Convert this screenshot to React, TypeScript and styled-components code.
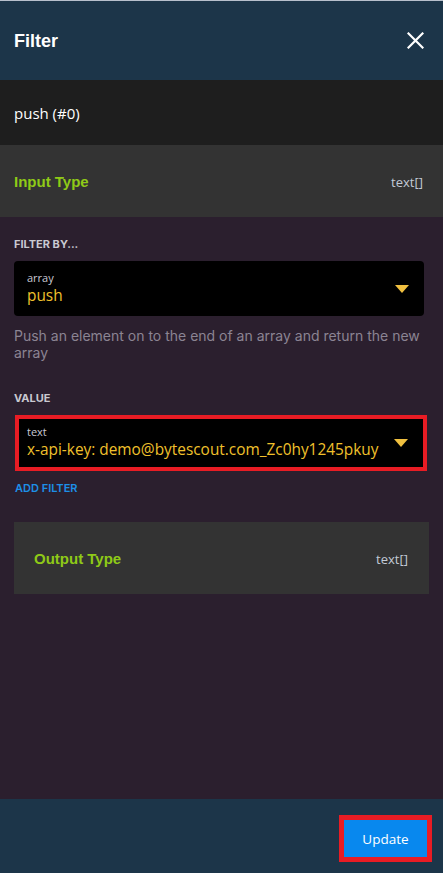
import React from "react";
import styled, { createGlobalStyle } from "styled-components";

const Global = createGlobalStyle`
  html, body { margin: 0; padding: 0; background: #2b1f2e; }
  body { font-family: "Liberation Sans", Arial, sans-serif; }
  * { box-sizing: border-box; }
`;

const Panel = styled.div`
  width: 443px;
  height: 873px;
  display: flex;
  flex-direction: column;
  background: #2b1f2e;
  border-top: 1px solid #b8c0cc;
`;

const Header = styled.div`
  height: 79px;
  flex: none;
  background: #1c3549;
  display: flex;
  align-items: center;
  justify-content: space-between;
  padding: 0 18px 0 14px;
`;

const Title = styled.h1`
  margin: 0;
  font-family: "Liberation Sans", Arial, sans-serif;
  font-weight: 700;
  font-size: 18px;
  color: #ffffff;
  padding-top: 1px;
`;

const CloseButton = styled.button`
  background: none;
  border: none;
  padding: 0;
  width: 20px;
  height: 20px;
  display: flex;
  align-items: center;
  justify-content: center;
  cursor: pointer;
`;

const NameRow = styled.div`
  height: 65px;
  flex: none;
  background: #1e1e1e;
  display: flex;
  align-items: center;
  padding: 0 14px;
  font-family: "Open Sans", "Noto Sans", sans-serif;
  font-size: 15px;
  color: #ffffff;
`;

const TypeRow = styled.div<{ $inset?: boolean }>`
  height: 72px;
  flex: none;
  background: #333333;
  display: flex;
  align-items: center;
  justify-content: space-between;
  padding: ${(p) => (p.$inset ? "0 21px 0 20px" : "0 20px 0 14px")};
`;

const TypeName = styled.span`
  font-family: "Liberation Sans", Arial, sans-serif;
  font-weight: 700;
  font-size: 15px;
  color: #8fca17;
`;

const TypeValue = styled.span`
  font-family: "Open Sans", "Noto Sans", sans-serif;
  font-size: 13px;
  color: #c2cad6;
  padding-top: 2px;
`;

const Body = styled.div`
  flex: 1;
  display: flex;
  flex-direction: column;
  padding: 20px 19px 0 14px;
`;

const FieldLabel = styled.div<{ $top?: number }>`
  font-family: "Inter", "Liberation Sans", sans-serif;
  font-weight: 700;
  font-size: 11px;
  line-height: 14px;
  color: #c9c9d1;
  margin-top: ${(p) => p.$top ?? 0}px;
  margin-bottom: 10px;
`;

const Select = styled.div<{ $flagged?: boolean }>`
  display: flex;
  align-items: center;
  justify-content: space-between;
  background: #000000;
  border-radius: ${(p) => (p.$flagged ? "0" : "4px")};
  border: ${(p) => (p.$flagged ? "4px solid #e81c24" : "none")};
  height: ${(p) => (p.$flagged ? "56px" : "55px")};
  margin-left: ${(p) => (p.$flagged ? "1px" : "0")};
  margin-right: ${(p) => (p.$flagged ? "-3px" : "0")};
  padding: ${(p) => (p.$flagged ? "0 15px 0 8px" : "0 15px 0 13px")};
`;

const SelectText = styled.div`
  display: flex;
  flex-direction: column;
`;

const SelectCaption = styled.span`
  font-family: "Open Sans", "Noto Sans", sans-serif;
  font-size: 11px;
  line-height: 14px;
  color: #c8c8d4;
`;

const SelectValue = styled.span`
  font-family: "Open Sans", "Noto Sans", sans-serif;
  font-size: 15.4px;
  line-height: 22px;
  color: #f0c02c;
  white-space: nowrap;
`;

const Caret = styled.svg`
  flex: none;
  width: 14px;
  height: 8px;
`;

const Description = styled.p`
  margin: 11px 0 0;
  font-family: "Inter", "Liberation Sans", sans-serif;
  font-size: 14px;
  line-height: 17px;
  color: #8b8493;
`;

const AddFilter = styled.button`
  align-self: flex-start;
  background: none;
  border: none;
  padding: 0;
  margin: 10px 0 0 1px;
  font-family: "Inter", "Liberation Sans", sans-serif;
  font-weight: 600;
  font-size: 11px;
  line-height: 14px;
  color: #1d8fe8;
  cursor: pointer;
`;

const OutputCard = styled(TypeRow)`
  margin-top: 27px;
  margin-right: -5px;
`;

const Footer = styled.div`
  height: 74px;
  flex: none;
  background: #1c3549;
  display: flex;
  justify-content: flex-end;
  align-items: flex-start;
  padding: 16px 11px 0 0;
`;

const UpdateButton = styled.button`
  width: 93px;
  height: 47px;
  border: 5px solid #e81c24;
  background: #0888ee;
  color: #ffffff;
  font-family: "Open Sans", "Noto Sans", sans-serif;
  font-size: 13.5px;
  cursor: pointer;
  padding: 0;
`;

const CaretIcon = () => (
  <Caret viewBox="0 0 14 8">
    <polygon points="0,0 14,0 7,8" fill="#f0c040" />
  </Caret>
);

export default function App() {
  return (
    <>
      <Global />
      <Panel>
        <Header>
          <Title>Filter</Title>
          <CloseButton aria-label="close">
            <svg width="17" height="17" viewBox="0 0 17 17">
              <path d="M1.5 1.5 L15.5 15.5 M15.5 1.5 L1.5 15.5" stroke="#ffffff" strokeWidth="2.2" strokeLinecap="square" />
            </svg>
          </CloseButton>
        </Header>
        <NameRow>push (#0)</NameRow>
        <TypeRow>
          <TypeName>Input Type</TypeName>
          <TypeValue>text[]</TypeValue>
        </TypeRow>
        <Body>
          <FieldLabel>FILTER BY...</FieldLabel>
          <Select>
            <SelectText>
              <SelectCaption>array</SelectCaption>
              <SelectValue>push</SelectValue>
            </SelectText>
            <CaretIcon />
          </Select>
          <Description>
            Push an element on to the end of an array and return the new array
          </Description>
          <FieldLabel $top={30}>VALUE</FieldLabel>
          <Select $flagged>
            <SelectText>
              <SelectCaption>text</SelectCaption>
              <SelectValue>x-api-key: demo@bytescout.com_Zc0hy1245pkuy</SelectValue>
            </SelectText>
            <CaretIcon />
          </Select>
          <AddFilter>ADD FILTER</AddFilter>
          <OutputCard $inset>
            <TypeName>Output Type</TypeName>
            <TypeValue>text[]</TypeValue>
          </OutputCard>
        </Body>
        <Footer>
          <UpdateButton>Update</UpdateButton>
        </Footer>
      </Panel>
    </>
  );
}
